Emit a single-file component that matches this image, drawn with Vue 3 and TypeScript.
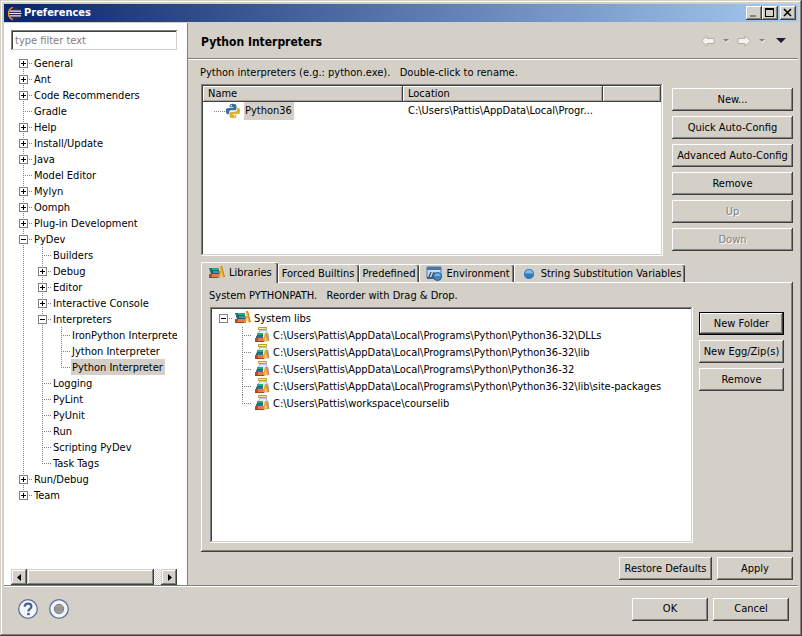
<script setup lang="ts">
import { computed, ref } from 'vue'

interface TreeNode {
  label: string
  children?: TreeNode[]
  open?: boolean
}

interface TreeRow {
  id: string
  label: string
  depth: number
  expandable: boolean
  open: boolean
  guides: string[]
}

const pages: TreeNode[] = [
  { label: 'General', children: [] },
  { label: 'Ant', children: [] },
  { label: 'Code Recommenders', children: [] },
  { label: 'Gradle' },
  { label: 'Help', children: [] },
  { label: 'Install/Update', children: [] },
  { label: 'Java', children: [] },
  { label: 'Model Editor' },
  { label: 'Mylyn', children: [] },
  { label: 'Oomph', children: [] },
  { label: 'Plug-in Development', children: [] },
  {
    label: 'PyDev',
    open: true,
    children: [
      { label: 'Builders' },
      { label: 'Debug', children: [] },
      { label: 'Editor', children: [] },
      { label: 'Interactive Console', children: [] },
      {
        label: 'Interpreters',
        open: true,
        children: [
          { label: 'IronPython Interpreter' },
          { label: 'Jython Interpreter' },
          { label: 'Python Interpreter' },
        ],
      },
      { label: 'Logging' },
      { label: 'PyLint' },
      { label: 'PyUnit' },
      { label: 'Run' },
      { label: 'Scripting PyDev' },
      { label: 'Task Tags' },
    ],
  },
  { label: 'Run/Debug', children: [] },
  { label: 'Team', children: [] },
]

const base = 'C:\\Users\\Pattis\\AppData\\Local\\Programs\\Python\\Python36-32'
const libs: TreeNode[] = [
  {
    label: 'System libs',
    open: true,
    children: [
      { label: base + '\\DLLs' },
      { label: base + '\\lib' },
      { label: base },
      { label: base + '\\lib\\site-packages' },
      { label: 'C:\\Users\\Pattis\\workspace\\courselib' },
    ],
  },
]

const toggled = ref<Record<string, boolean>>({})

function flatten(nodes: TreeNode[], prefix: string, parents: string[] = []): TreeRow[] {
  return nodes.flatMap((node, i) => {
    const id = `${prefix}-${i}`
    const last = i === nodes.length - 1
    const first = parents.length === 0 && i === 0
    const open = toggled.value[id] ?? !!node.open
    const own = first && last ? 'stub' : first ? 'start' : last ? 'elbow' : 'tee'
    const row: TreeRow = {
      id,
      label: node.label,
      depth: parents.length,
      expandable: !!node.children,
      open,
      guides: [...parents, own],
    }
    const below = open && node.children
      ? flatten(node.children, id, [...parents, last ? 'blank' : 'through'])
      : []
    return [row, ...below]
  })
}

const pageRows = computed(() => flatten(pages, 'page'))
const libRows = computed(() => flatten(libs, 'lib'))

function toggle(row: TreeRow) {
  toggled.value = { ...toggled.value, [row.id]: !row.open }
}

const filter = ref('')
const selectedPage = ref('Python Interpreter')
const activeTab = ref('Libraries')

const tabs = [
  { label: 'Libraries', icon: 'books' },
  { label: 'Forced Builtins', icon: '' },
  { label: 'Predefined', icon: '' },
  { label: 'Environment', icon: 'env' },
  { label: 'String Substitution Variables', icon: 'dot' },
]

const interpreterActions = [
  { label: 'New...', disabled: false },
  { label: 'Quick Auto-Config', disabled: false },
  { label: 'Advanced Auto-Config', disabled: false },
  { label: 'Remove', disabled: false },
  { label: 'Up', disabled: true },
  { label: 'Down', disabled: true },
]
</script>

<template>
  <div class="window">
    <svg class="sprites" aria-hidden="true">
      <symbol id="books" viewBox="0 0 16 16">
        <path d="M1 3h9v3H1z" fill="#2aa888" /><path d="M0 3h3v3H1z" fill="#0f7a6a" />
        <path d="M1 5h9v1H1z" fill="#0d7068" />
        <path d="M2 6h9v3H2z" fill="#3f93a8" /><path d="M1 6h3v3H2z" fill="#1d6080" />
        <path d="M2 8h9v1H2z" fill="#1d5f7c" />
        <path d="M0 9h11v4H0z" fill="#e07d4c" /><path d="M0 9h3v4H0z" fill="#b84a24" />
        <path d="M0 12h11v1H0z" fill="#a8431f" />
        <path d="M9 13l2-7h1l-1 7z" fill="#e39a1e" /><path d="M10.500 1h2L15.500 12l-2 1z" fill="#f5ae2e" />
        <path d="M12.500 1l3 11" stroke="#c87812" />
      </symbol>
      <symbol id="jar" viewBox="0 0 16 16">
        <path d="M6 3h6c0 1.500 2.500 3 2.500 6 0 3-1 5-2.500 5H5c-2-1-2-3-2-5 0-3 3-4 3-6z" fill="#e3ecf8" stroke="#94aed4" />
        <path d="M4.500 .5h8v2h-8z" fill="#f8ebae" stroke="#c29a2c" />
        <path d="M3 6h6v3H3z" fill="#2aa888" /><path d="M3 8h6v1H3z" fill="#0d7068" />
        <path d="M2 9h7v2H2z" fill="#2b7390" />
        <path d="M1 11h9v4H1z" fill="#e07d4c" /><path d="M1 11h3v4H1z" fill="#b84a24" />
        <path d="M1 14h9v1H1z" fill="#a8431f" />
        <path d="M9 14l2-8h1.500L15 14l-2 .5-1.500-5-.5 5z" fill="#f0a426" />
        <path d="M12.500 6L15 14" stroke="#c87812" stroke-width=".8" />
      </symbol>
      <symbol id="env" viewBox="0 0 16 16">
        <path d="M1 1h14v11H1z" fill="#c8dcf0" stroke="#4779ae" />
        <path d="M1 1h14v3H1z" fill="#4a76a6" />
        <path d="M3 11l2-5M6 11l2-5" stroke="#35526e" stroke-width="1.400" />
        <path d="M1 12h7" stroke="#39618e" stroke-width="2" />
        <circle cx="11.500" cy="10.500" r="4.200" fill="#3f85c5" /><path d="M7.800 10a3.700 3.700 0 0 1 7.400 0z" fill="#75b1df" />
        <circle cx="11.500" cy="10.500" r="4" fill="none" stroke="#275d96" />
      </symbol>
      <symbol id="dot" viewBox="0 0 16 16">
        <circle cx="8" cy="8" r="5" fill="#2f7ab8" /><path d="M3.500 7.500a4.500 4.500 0 0 1 9 0z" fill="#7fbbe3" />
        <circle cx="8" cy="8" r="4.600" fill="none" stroke="#3b80bb" />
      </symbol>
      <symbol id="python" viewBox="0 0 16 16">
        <path d="M7.900.800C5 .800 4.600 1.800 4.600 2.800v1.500h3.600v.600H3.100C1.700 4.900.800 6 .800 8s.900 3.200 2 3.200h1.300V9.500c0-1.300 1.100-2.200 2.300-2.200h3.300c1 0 1.800-.800 1.800-1.800V2.800C11.500 1.500 10 .800 7.900.800z" fill="#3b6f9e" />
        <path transform="rotate(180 8 8)" d="M7.900.800C5 .800 4.600 1.800 4.600 2.800v1.500h3.600v.600H3.100C1.700 4.900.800 6 .800 8s.900 3.200 2 3.200h1.300V9.500c0-1.300 1.100-2.200 2.300-2.200h3.300c1 0 1.800-.800 1.800-1.800V2.800C11.500 1.500 10 .800 7.900.800z" fill="#e0b030" />
        <circle cx="6.300" cy="2.700" r=".7" fill="#fff" /><circle cx="9.700" cy="13.300" r=".7" fill="#fff" />
      </symbol>
    </svg>

    <header class="titlebar">
      <svg class="logo" viewBox="0 0 16 16" aria-hidden="true">
        <path d="M6.500 1.500A6.800 6.800 0 0 0 6.500 14.500" fill="none" stroke="#f29a2e" stroke-width="1.600" />
        <circle cx="9" cy="8" r="6.300" fill="#33265c" />
        <path d="M3 5.500h12M2.500 8h13M3 10.500h12" stroke="#e8e8f4" stroke-width="1.200" />
      </svg>
      <span class="caption">Preferences</span>
      <button class="sys" type="button" aria-label="Minimize">
        <svg viewBox="0 0 12 10"><path d="M2 7h6v2H2z" fill="#808080" /></svg>
      </button>
      <button class="sys" type="button" aria-label="Maximize">
        <svg viewBox="0 0 12 10"><path d="M1 0h9v9H1zM2 2v6h7V2z" fill="#000" fill-rule="evenodd" /></svg>
      </button>
      <button class="sys close" type="button" aria-label="Close">
        <svg viewBox="0 0 12 10"><path d="M2 1l7 7M9 1L2 8" stroke="#000" stroke-width="1.600" /></svg>
      </button>
    </header>

    <div class="body">
      <aside class="sidebar">
        <input v-model="filter" class="filter" type="text" placeholder="type filter text" aria-label="Filter" />
        <div class="tree" role="tree">
          <div v-for="row in pageRows" :key="row.id" class="row" role="treeitem">
            <span v-for="(g, i) in row.guides" :key="i" class="guide" :class="g">
              <button
                v-if="row.expandable && i === row.depth"
                type="button"
                class="expander"
                :class="{ open: row.open }"
                :aria-label="row.label"
                @click="toggle(row)"
              ></button>
            </span>
            <span class="label" :class="{ selected: row.label === selectedPage }" @click="selectedPage = row.label">{{ row.label }}</span>
          </div>
        </div>
        <div class="scrollbar">
          <button class="arrow" type="button" aria-label="Scroll left">
            <svg viewBox="0 0 7 7"><path d="M5 0v7L1 3.500z" /></svg>
          </button>
          <div class="thumb"></div>
          <div class="track"></div>
          <button class="arrow" type="button" aria-label="Scroll right">
            <svg viewBox="0 0 7 7"><path d="M2 0v7l4-3.500z" /></svg>
          </button>
        </div>
      </aside>

      <main class="main">
        <div class="heading">
          <h1>Python Interpreters</h1>
          <button class="tool" type="button" aria-label="Back">
            <svg width="14" height="12" viewBox="0 0 14 12"><path d="M.5 6L6 .8V3.500h7v5H6v2.700z" fill="#f4f3ef" stroke="#b2afa6" /></svg>
          </button>
          <button class="tool" type="button" aria-label="Back history">
            <svg width="6" height="4" viewBox="0 0 6 4"><path d="M1 1h5L3.500 4z" fill="#fff" /><path d="M0 0h6L3 3z" fill="#87847e" /></svg>
          </button>
          <button class="tool" type="button" aria-label="Forward">
            <svg width="14" height="12" viewBox="0 0 14 12"><path d="M13.500 6L8 .8V3.500H1v5h7v2.700z" fill="#f4f3ef" stroke="#b2afa6" /></svg>
          </button>
          <button class="tool" type="button" aria-label="Forward history">
            <svg width="6" height="4" viewBox="0 0 6 4"><path d="M1 1h5L3.500 4z" fill="#fff" /><path d="M0 0h6L3 3z" fill="#87847e" /></svg>
          </button>
          <button class="tool menu" type="button" aria-label="Menu">
            <svg width="10" height="5" viewBox="0 0 10 5"><path d="M0 0h10L5 5z" fill="#23193f" /></svg>
          </button>
        </div>

        <div class="page">
          <p class="hint">Python interpreters (e.g.: python.exe).&nbsp;&nbsp; Double-click to rename.</p>
          <div class="interpreters">
            <div class="sunken list">
              <table>
                <colgroup><col class="wide" /><col class="wide" /><col /></colgroup>
                <thead>
                  <tr><th>Name</th><th>Location</th><th></th></tr>
                </thead>
                <tbody>
                  <tr>
                    <td>
                      <div class="name">
                        <span class="dots"></span>
                        <svg class="icon"><use href="#python" /></svg>
                        <span class="label selected">Python36</span>
                      </div>
                    </td>
                    <td>C:\Users\Pattis\AppData\Local\Progr...</td>
                    <td></td>
                  </tr>
                </tbody>
              </table>
            </div>
            <div class="actions side">
              <button v-for="a in interpreterActions" :key="a.label" class="btn" type="button" :disabled="a.disabled">{{ a.label }}</button>
            </div>
          </div>

          <div class="tabs" role="tablist">
            <button
              v-for="t in tabs"
              :key="t.label"
              class="tab"
              :class="{ active: t.label === activeTab, iconic: t.icon }"
              type="button"
              role="tab"
              :aria-selected="t.label === activeTab"
              @click="activeTab = t.label"
            >
              <svg v-if="t.icon" class="icon"><use :href="'#' + t.icon" /></svg>{{ t.label }}
            </button>
          </div>
          <section class="panel">
            <p class="hint">System PYTHONPATH.&nbsp;&nbsp; Reorder with Drag &amp; Drop.</p>
            <div class="paths">
              <div class="sunken tree libs" role="tree">
                <div v-for="row in libRows" :key="row.id" class="row" role="treeitem">
                  <span v-for="(g, i) in row.guides" :key="i" class="guide" :class="g">
                    <button
                      v-if="row.expandable"
                      type="button"
                      class="expander"
                      :class="{ open: row.open }"
                      :aria-label="row.label"
                      @click="toggle(row)"
                    ></button>
                  </span>
                  <svg class="icon"><use :href="row.depth ? '#jar' : '#books'" /></svg>
                  <span class="label">{{ row.label }}</span>
                </div>
              </div>
              <div class="actions">
                <button class="btn default" type="button">New Folder</button>
                <button class="btn" type="button">New Egg/Zip(s)</button>
                <button class="btn" type="button">Remove</button>
              </div>
            </div>
          </section>

          <div class="apply">
            <button class="btn restore" type="button">Restore Defaults</button>
            <button class="btn" type="button">Apply</button>
          </div>
        </div>
      </main>
    </div>

    <footer class="footer">
      <button class="round" type="button" aria-label="Help">
        <svg viewBox="0 0 20 20">
          <circle cx="10" cy="10" r="9.300" fill="#f3f5f9" stroke="#5a719f" stroke-width="1.300" />
          <path d="M6.700 7.800C6.700 5.600 8 4.600 10 4.600s3.400 1.100 3.400 2.900c0 2.400-3 2.500-3 4.900" fill="none" stroke="#44618f" stroke-width="2.200" />
          <path d="M9.200 13.900h2.500v2.300H9.200z" fill="#44618f" />
        </svg>
      </button>
      <button class="round" type="button" aria-label="Record">
        <svg viewBox="0 0 20 20">
          <circle cx="10" cy="10" r="9.300" fill="#f3f5f9" stroke="#5a719f" stroke-width="1.300" />
          <circle cx="10" cy="10" r="4.700" fill="#a0a0a0" stroke="#7b7b7b" />
          <path d="M6 9h8M6 11h8" stroke="#8b8b8b" stroke-width=".8" />
        </svg>
      </button>
      <span class="spacer"></span>
      <button class="btn" type="button">OK</button>
      <button class="btn" type="button">Cancel</button>
    </footer>
  </div>
</template>

<style>
body {
  margin: 0;
}
</style>

<style scoped>
* {
  box-sizing: border-box;
}
.window {
  display: flex;
  flex-direction: column;
  min-height: 100vh;
  padding: 4px;
  background: #d4d0c8;
  box-shadow: inset -1px -1px #404040, inset 1px 1px #d4d0c8, inset -2px -2px #808080, inset 2px 2px #fff;
  color: #000;
  font: 11px/16px "DejaVu Sans Condensed", Tahoma, sans-serif;
}
button,
input {
  margin: 0;
  padding: 0;
  border: 0;
  background: none;
  color: inherit;
  font: inherit;
}
.sprites {
  position: absolute;
  width: 0;
  height: 0;
}
.icon {
  flex: none;
  width: 16px;
  height: 16px;
}

/* Title bar */
.titlebar {
  display: flex;
  align-items: center;
  height: 18px;
  margin-bottom: 1px;
  padding: 0 2px 0 3px;
  background: linear-gradient(90deg, #0a246a, #a6caf0);
}
.logo {
  width: 15px;
  height: 15px;
}
.caption {
  flex: 1;
  padding-left: 2px;
  color: #fff;
  font-weight: bold;
}
.sys {
  display: grid;
  place-items: center;
  width: 16px;
  height: 14px;
  background: #d4d0c8;
  box-shadow: inset -1px -1px #404040, inset 1px 1px #fff, inset -2px -2px #808080;
}
.sys svg {
  width: 12px;
  height: 10px;
}
.close {
  margin-left: 2px;
}

/* Page list */
.body {
  display: flex;
  flex: 1;
}
.sidebar {
  display: flex;
  flex: none;
  flex-direction: column;
  width: 184px;
  padding: 7px 10px 0 7px;
  border-right: 1px solid #808080;
  background: #fff;
}
.filter {
  width: 100%;
  height: 20px;
  padding: 0 4px;
  background: #fff;
  box-shadow: inset 1px 1px #808080, inset -1px -1px #d4d0c8, inset 2px 2px #404040;
}
.filter::placeholder {
  color: #808080;
  opacity: 1;
}
.sidebar .tree {
  flex: 1;
  margin-top: 5px;
  padding-left: 3px;
  overflow: hidden;
}
.row {
  display: flex;
  height: 16px;
  white-space: nowrap;
}
.guide {
  --v: repeating-linear-gradient(#808080 0 1px, transparent 1px 2px);
  --h: repeating-linear-gradient(90deg, #808080 0 1px, transparent 1px 2px);
  flex: none;
  width: 19px;
  padding: 4px 0 0 5px;
}
.through {
  background: var(--v) 9px 0 / 1px 100% no-repeat;
}
.tee {
  background: var(--v) 9px 0 / 1px 100% no-repeat, var(--h) 9px 8px / 9px 1px no-repeat;
}
.elbow {
  background: var(--v) 9px 0 / 1px 8px no-repeat, var(--h) 9px 8px / 9px 1px no-repeat;
}
.start {
  background: var(--v) 9px 8px / 1px 8px no-repeat, var(--h) 9px 8px / 9px 1px no-repeat;
}
.stub {
  background: var(--h) 9px 8px / 9px 1px no-repeat;
}
.expander {
  display: block;
  width: 9px;
  height: 9px;
  border: 1px solid #808080;
  background:
    linear-gradient(#000, #000) 1px 3px / 5px 1px no-repeat,
    linear-gradient(#000, #000) 3px 1px / 1px 5px no-repeat,
    #fff;
}
.expander.open {
  background: linear-gradient(#000, #000) 1px 3px / 5px 1px no-repeat, #fff;
}
.label {
  padding: 0 2px 0 1px;
  cursor: default;
}
.sidebar .label {
  line-height: 18px;
}
.selected {
  background: #d4d0c8;
}
.scrollbar {
  display: flex;
  height: 16px;
}
.arrow,
.thumb {
  background: #d4d0c8;
  box-shadow: inset -1px -1px #404040, inset 1px 1px #d4d0c8, inset -2px -2px #808080, inset 2px 2px #fff;
}
.arrow {
  display: grid;
  place-items: center;
  width: 16px;
}
.arrow svg {
  width: 7px;
  height: 7px;
}
.thumb {
  flex: 18;
}
.track {
  flex: 1;
  background: repeating-conic-gradient(#d4d0c8 0 25%, #fff 0 50%) 0 0 / 2px 2px;
}

/* Preference page */
.main {
  display: flex;
  flex: 1;
  flex-direction: column;
  min-width: 0;
}
.heading {
  display: flex;
  align-items: center;
  height: 36px;
  padding: 0 12px 0 13px;
  border-bottom: 1px solid #808080;
  box-shadow: 0 1px #fff;
}
h1 {
  flex: 1;
  margin: 0;
  padding-top: 3px;
  font-size: 12px;
  line-height: 16px;
}
.tool {
  display: flex;
  margin-left: 8px;
}
.menu {
  margin-left: 11px;
}
.page {
  display: flex;
  flex: 1;
  flex-direction: column;
  padding: 1px 5px 5px 13px;
}
.hint {
  height: 24px;
  margin: 0 0 0 -1px;
  line-height: 26px;
}
.interpreters {
  display: flex;
  gap: 9px;
  margin-bottom: 6px;
}
.sunken {
  flex: 1;
  min-width: 0;
  padding: 2px;
  background: #fff;
  box-shadow: inset -1px -1px #fff, inset 1px 1px #808080, inset -2px -2px #d4d0c8, inset 2px 2px #404040;
}
.list {
  min-height: 172px;
}
table {
  width: 100%;
  border-collapse: separate;
  border-spacing: 0;
  table-layout: fixed;
}
.wide {
  width: 200px;
}
th {
  height: 16px;
  padding: 0 5px;
  background: #d4d0c8;
  box-shadow: inset -1px -1px #404040, inset 1px 1px #fff, inset -2px -2px #a8a59e;
  font-weight: normal;
  line-height: 16px;
  text-align: left;
}
td {
  height: 18px;
  padding: 0 5px;
  line-height: 18px;
  white-space: nowrap;
}
.name {
  display: flex;
  align-items: center;
  padding-left: 6px;
}
.name .label {
  margin-left: 3px;
}
.dots {
  width: 11px;
  height: 1px;
  background: repeating-linear-gradient(90deg, #808080 0 1px, transparent 1px 2px);
}
.actions {
  display: flex;
  flex: none;
  flex-direction: column;
  gap: 5px;
  width: 85px;
  padding-top: 4px;
}
.paths .actions {
  padding-top: 5px;
}
.side {
  width: 121px;
}
.btn {
  flex: none;
  min-width: 76px;
  height: 23px;
  background: #d4d0c8;
  box-shadow: inset -1px -1px #404040, inset 1px 1px #fff, inset -2px -2px #808080;
  white-space: nowrap;
}
.btn:disabled {
  color: #808080;
  text-shadow: 1px 1px #fff;
}
.default {
  border: 1px solid #000;
}

/* Tabs */
.tabs {
  display: flex;
  align-items: flex-end;
}
.tab {
  display: flex;
  align-items: center;
  height: 18px;
  padding: 0 4px 0 3px;
  border-left: 1px solid #fff;
  border-top: 1px solid #fff;
  border-radius: 2px 2px 0 0;
  box-shadow: inset -1px 0 #404040, inset -2px 0 #808080;
  white-space: nowrap;
}
.iconic {
  gap: 4px;
  padding: 0 4px 0 6px;
}
.active {
  z-index: 1;
  height: 21px;
  margin-bottom: -1px;
  padding: 0 6px 0 7px;
  background: #d4d0c8;
}
.panel {
  display: flex;
  flex: 1;
  flex-direction: column;
  padding: 1px 9px 9px 9px;
  box-shadow: inset -1px -1px #404040, inset 1px 1px #fff, inset -2px -2px #808080;
}
.paths {
  display: flex;
  flex: 1;
  gap: 6px;
}
.libs {
  padding: 3px 4px;
}
.libs .row {
  height: 17px;
  line-height: 17px;
}
.libs .icon {
  margin: 0 2px;
}
.apply {
  display: flex;
  gap: 5px;
  justify-content: flex-end;
  padding-top: 5px;
}
.restore {
  min-width: 93px;
}

/* Footer */
.footer {
  display: flex;
  gap: 5px;
  align-items: center;
  height: 47px;
  padding: 0 9px 0 14px;
  border-top: 1px solid #808080;
  box-shadow: inset 0 1px #fff;
}
.round {
  width: 20px;
  height: 20px;
  margin-right: 6px;
}
.round svg {
  display: block;
}
.spacer {
  flex: 1;
}
</style>
